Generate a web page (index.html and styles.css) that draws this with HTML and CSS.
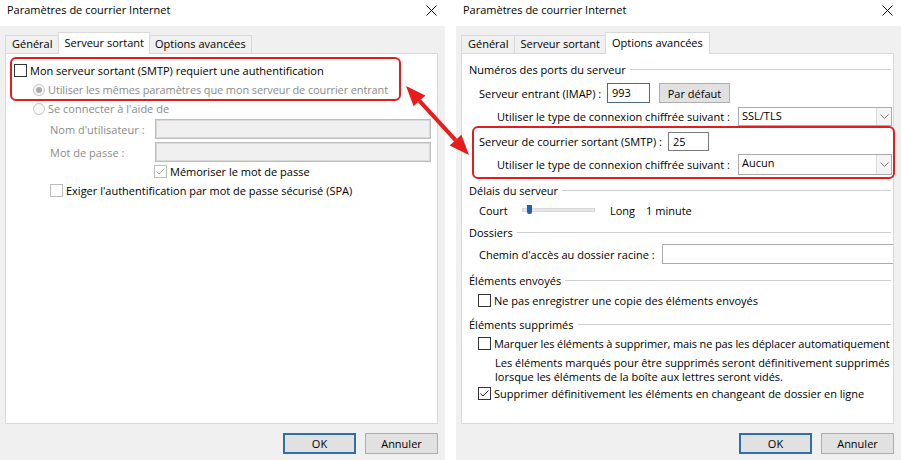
FILE: index.html
```html
<!DOCTYPE html>
<html lang="fr">
<head>
<meta charset="utf-8">
<title>Paramètres de courrier Internet</title>
<link rel="stylesheet" href="styles.css">
</head>
<body>
<div class="screen">
  <section class="dialog">
    <header class="titlebar">
      <span class="title">Paramètres de courrier Internet</span>
      <svg class="close" viewBox="0 0 11 11"><path d="M0.5 0.5L10.5 10.5M10.5 0.5L0.5 10.5" stroke="#111" stroke-width="1"/></svg>
    </header>
    <div class="body">
      <div class="tabs">
        <div class="tab">Général</div>
        <div class="tab active">Serveur sortant</div>
        <div class="tab last">Options avancées</div>
      </div>
      <div class="panel panel-l">
        <div class="row"><span class="cb"></span>Mon serveur sortant (SMTP) requiert une authentification</div>
        <div class="row dis ind1"><span class="rb on"></span><span class="tight">Utiliser les mêmes paramètres que mon serveur de courrier entrant</span></div>
        <div class="row dis ind1"><span class="rb"></span>Se connecter à l'aide de</div>
        <div class="row field dis ind2 f1"><span class="lbl lbl-user">Nom d'utilisateur :</span><span class="inp inp-dis inp-user"></span></div>
        <div class="row field dis ind2 f2"><span class="lbl lbl-user">Mot de passe :</span><span class="inp inp-dis inp-user"></span></div>
        <div class="row ind3"><span class="cb cb-dis"><svg viewBox="0 0 11 11"><path d="M1.5 5.5L4 8L9.5 2.5" fill="none" stroke="#a8a8a8" stroke-width="1"/></svg></span>Mémoriser le mot de passe</div>
        <div class="row ind2"><span class="cb cb-dis"></span>Exiger l'authentification par mot de passe sécurisé (SPA)</div>
      </div>
      <div class="buttons">
        <button class="btn btn-default">OK</button>
        <button class="btn">Annuler</button>
      </div>
    </div>
  </section>

  <section class="dialog">
    <header class="titlebar">
      <span class="title">Paramètres de courrier Internet</span>
      <svg class="close" viewBox="0 0 11 11"><path d="M0.5 0.5L10.5 10.5M10.5 0.5L0.5 10.5" stroke="#111" stroke-width="1"/></svg>
    </header>
    <div class="body">
      <div class="tabs">
        <div class="tab">Général</div>
        <div class="tab">Serveur sortant</div>
        <div class="tab active last">Options avancées</div>
      </div>
      <div class="panel panel-r">
        <div class="grp">Numéros des ports du serveur</div>
        <div class="row sub r-imap"><span class="lbl lbl-imap">Serveur entrant (IMAP) :</span><span class="inp inp-port">993</span><span class="btn btn-small">Par défaut</span></div>
        <div class="row enc r-ssl"><span class="lbl">Utiliser le type de connexion chiffrée suivant :</span><span class="select sel-ssl"><span class="val">SSL/TLS</span><span class="dd"><svg viewBox="0 0 9 5"><path d="M0.5 0.5L4.5 4.5L8.5 0.5" fill="none" stroke="#7a7a7a"/></svg></span></span></div>
        <div class="row sub r-smtp"><span class="lbl lbl-smtp">Serveur de courrier sortant (SMTP) :</span><span class="inp inp-smtp">25</span></div>
        <div class="row enc r-aucun"><span class="lbl">Utiliser le type de connexion chiffrée suivant :</span><span class="select sel-aucun"><span class="val">Aucun</span><span class="dd"><svg viewBox="0 0 9 5"><path d="M0.5 0.5L4.5 4.5L8.5 0.5" fill="none" stroke="#7a7a7a"/></svg></span></span></div>
        <div class="grp g-delai">Délais du serveur</div>
        <div class="row sub r-court"><span class="lbl lbl-court">Court</span><span class="slider"><span class="thumb"></span></span><span class="long">Long</span><span class="minute">1 minute</span></div>
        <div class="grp g-dossiers">Dossiers</div>
        <div class="row sub r-chemin"><span class="lbl lbl-chemin">Chemin d'accès au dossier racine :</span><span class="inp inp-chemin"></span></div>
        <div class="grp g-envoyes">Éléments envoyés</div>
        <div class="row chk r-nepas"><span class="cb"></span>Ne pas enregistrer une copie des éléments envoyés</div>
        <div class="grp g-supp">Éléments supprimés</div>
        <div class="row chk r-marquer"><span class="cb"></span><span class="tight">Marquer les éléments à supprimer, mais ne pas les déplacer automatiquement</span></div>
        <p class="note">Les éléments marqués pour être supprimés seront définitivement supprimés<br>lorsque les éléments de la boîte aux lettres seront vidés.</p>
        <div class="row chk"><span class="cb"><svg viewBox="0 0 11 11"><path d="M1.5 5.5L4 8L9.5 2.5" fill="none" stroke="#222" stroke-width="1"/></svg></span>Supprimer définitivement les éléments en changeant de dossier en ligne</div>
      </div>
      <div class="buttons">
        <button class="btn btn-default">OK</button>
        <button class="btn">Annuler</button>
      </div>
    </div>
  </section>

  <div class="mark mark-l"></div>
  <div class="mark mark-r"></div>
  <svg class="arrow" viewBox="0 0 85 90" width="85" height="90">
    <line x1="24.5" y1="25.8" x2="60.5" y2="65.2" stroke="#e81c1c" stroke-width="4"/>
    <polygon points="11,11 18.6,31.2 30.4,20.4" fill="#e81c1c"/>
    <polygon points="74,80 54.6,70.6 66.4,59.8" fill="#e81c1c"/>
  </svg>
</div>
</body>
</html>
```

FILE: styles.css
```css
* { box-sizing: border-box; }

body {
  margin: 0;
  background: #fff;
  font-family: "Open Sans", "Noto Sans", sans-serif;
  font-size: 11px;
  color: #000;
  overflow: hidden;
}

.screen {
  position: relative;
  display: flex;
  gap: 11px;
  width: 901px;
  height: 460px;
}

.dialog {
  flex: none;
  width: 445px;
  display: flex;
  flex-direction: column;
}

.titlebar {
  height: 26px;
  display: flex;
  justify-content: space-between;
  align-items: flex-start;
  padding: 2px 8px 0 7px;
  background: #fff;
}

.title { line-height: 16px; }

.close {
  width: 11px;
  height: 11px;
  margin-top: 3px;
}

.body {
  flex: 1;
  background: #f0f0f0;
  padding: 6px 7px 0 5px;
}

/* tabs */
.tabs {
  position: relative;
  z-index: 1;
  display: flex;
  align-items: flex-end;
  height: 21px;
}

.tab {
  height: 18px;
  padding: 0 5px;
  line-height: 16px;
  background: #f0f0f0;
  border: 1px solid #d9d9d9;
  border-bottom: none;
  margin-left: -1px;
  white-space: nowrap;
}
.tab:first-child { margin-left: 0; padding: 0 6px; }

.tab.active {
  height: 22px;
  margin-bottom: -1px;
  padding: 0 5px;
  line-height: 19px;
  background: #fff;
}
.tab.active.last { padding: 0 6px; }

/* panel */
.panel {
  position: relative;
  height: 371px;
  background: #fff;
  border: 1px solid #d9d9d9;
  overflow: hidden;
}

.row {
  display: flex;
  align-items: center;
  height: 19px;
  white-space: nowrap;
}

.lbl { flex: none; }
.tight { letter-spacing: -0.12px; }

.dis { color: #8b8b8b; }

/* check boxes / radios */
.cb {
  flex: none;
  display: inline-flex;
  width: 13px;
  height: 13px;
  margin-right: 3px;
  border: 1px solid #333;
  background: #fff;
}
.cb svg { width: 11px; height: 11px; }
.cb-dis { border-color: #bcbcbc; }

.rb {
  flex: none;
  display: inline-flex;
  align-items: center;
  justify-content: center;
  width: 12px;
  height: 12px;
  margin-right: 3px;
  border: 1px solid #c4c4c4;
  border-radius: 50%;
  background: #f7f7f7;
}
.rb.on::after {
  content: "";
  width: 6px;
  height: 6px;
  border-radius: 50%;
  background: #ababab;
}

/* inputs */
.inp {
  flex: none;
  display: inline-block;
  height: 20px;
  padding: 0 4px;
  line-height: 17px;
  background: #fff;
  border: 1px solid #7a7a7a;
}
.inp-dis {
  background: #f0f0f0;
  border-color: #bdbdbd;
  box-shadow: inset 0 0 0 1px #d9d9d9;
}

/* left panel */
.panel-l { padding: 7px 0 0 8px; }
.ind1 { padding-left: 19px; }
.ind2 { padding-left: 36px; }
.ind3 { padding-left: 140px; }
.field { height: 20px; }
.f1 { margin-top: 1px; }
.f2 { margin-top: 3px; }
.lbl-user { width: 105px; }
.inp-user { width: 276px; }

/* right panel */
.panel-r { padding: 6px 1px 0 7px; }

.grp {
  display: flex;
  align-items: center;
  height: 18px;
  white-space: nowrap;
}
.grp::after {
  content: "";
  flex: 1;
  margin: 1px 1px 0 4px;
  border-top: 1px solid #cfcfcf;
}

.sub { padding-left: 10px; }
.enc { padding-left: 28px; }
.chk { padding-left: 9px; }

.r-imap { margin-top: 5px; height: 20px; }
.lbl-imap { width: 128px; }
.inp-port { width: 43px; border-color: #50697f; }

.btn {
  flex: none;
  display: inline-flex;
  align-items: center;
  justify-content: center;
  width: 73px;
  height: 21px;
  padding: 0;
  font: inherit;
  color: #000;
  background: #e1e1e1;
  border: 1px solid #adadad;
}
.btn-small {
  width: 71px;
  height: 20px;
  margin-left: 9px;
}
.btn-default { border: 2px solid #2f6fae; }

.r-ssl { margin-top: 4px; }
.r-smtp { margin-top: 6px; }
.lbl-smtp { width: 189px; }
.inp-smtp { width: 41px; height: 19px; }
.r-aucun { margin-top: 3px; height: 21px; }

.select {
  flex: none;
  display: flex;
  width: 154px;
  margin-left: auto;
  background: #fff;
  border: 1px solid #a9a9a9;
}
.sel-ssl { height: 19px; }
.sel-aucun { height: 21px; }
.select .val {
  flex: 1;
  padding-left: 3px;
  line-height: 16px;
}
.select .dd {
  display: flex;
  align-items: center;
  justify-content: center;
  width: 15px;
  background: #f4f4f4;
  border-left: 1px solid #dcdcdc;
}
.select .dd svg { width: 9px; height: 5px; }

.g-delai { margin-top: 6px; }
.r-court { margin-top: 2px; height: 18px; }
.lbl-court { width: 43px; }
.slider {
  position: relative;
  flex: none;
  width: 73px;
  height: 4px;
  background: #e7e7e7;
  border: 1px solid #d8d8d8;
}
.thumb {
  position: absolute;
  left: 4px;
  top: -4px;
  width: 5px;
  height: 9px;
  border-radius: 0 0 2px 2px;
  background: #1f63b0;
}
.long { margin-left: 15px; }
.minute { margin-left: 11px; }

.g-dossiers { margin-top: 4px; }
.r-chemin { margin-top: 3px; height: 20px; }
.lbl-chemin { width: 183px; }
.inp-chemin { width: 240px; border-color: #ababab; }

.g-envoyes { margin-top: 7px; }
.r-nepas { margin-top: 2px; }
.g-supp { margin-top: 5px; }
.r-marquer { margin-top: 1px; }

.note {
  margin: 3px 0 0;
  padding-left: 26px;
  line-height: 14px;
  white-space: nowrap;
}

/* buttons */
.buttons {
  display: flex;
  justify-content: flex-end;
  gap: 9px;
  margin-top: 9px;
}

/* annotations */
.mark {
  position: absolute;
  border: 2px solid #e21d1d;
  border-radius: 6px;
}
.mark-l { left: 10px; top: 57px; width: 391px; height: 44px; }
.mark-r { left: 472px; top: 126px; width: 423px; height: 53px; }

.arrow {
  position: absolute;
  left: 395px;
  top: 75px;
}
```
